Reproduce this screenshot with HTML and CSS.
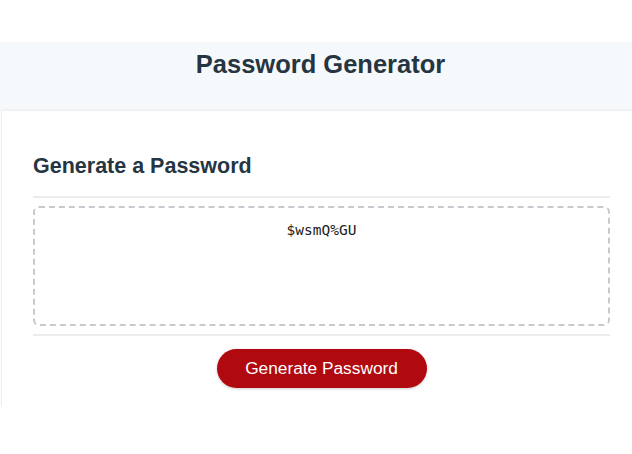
FILE: index.html
```html
<!DOCTYPE html>
<html lang="en">
<head>
    <meta charset="UTF-8">
    <meta name="viewport" content="width=device-width, initial-scale=1.0">
    <title>Password Generator</title>
    <link rel="stylesheet" href="styles.css">
</head>
<body>

    <div class="wrapper">
        <header class="header">
            <h1>Password Generator</h1>
        </header>

        <div class="card">
            <div class="card-header">
                <h2>Generate a Password</h2>
            </div>
            <div class="card-body">
                <textarea id="password" readonly>$wsmQ%GU</textarea>
            </div>
            <div class="card-footer">
                <button id="generate" class="btn">Generate Password</button>
            </div>
        </div>
    </div>

</body>
</html>
```

FILE: styles.css
```css
html, body {
    margin: 0;
    padding: 0;
    background-color: #fff;
    overflow: hidden;
}
body {
    font-family: "Liberation Sans", Arial, sans-serif;
    color: #2d3a46;
}
.wrapper {
    padding-top: 42px;
    width: 641px;
}
.header {
    background-color: #f6f9fb;
    height: 69px;
    text-align: center;
}
.header h1 {
    margin: 0;
    padding-top: 7px;
    font-size: 25.5px;
    line-height: 30px;
    font-weight: bold;
    color: #263542;
}
.card {
    margin-left: 1px;
    background-color: #fff;
    border-left: 1px solid #f0f0f0;
    box-shadow: 0 -1px 3px rgba(0, 0, 0, 0.06);
    padding: 0 31px;
    height: 296px;
}
.card-header {
    padding-top: 43px;
    padding-bottom: 17px;
    border-bottom: 2px solid #ececec;
}
.card-header h2 {
    margin: 0;
    font-size: 21.5px;
    line-height: 25px;
    font-weight: bold;
    color: #263542;
}
.card-body {
    padding: 8px 0 8px;
    border-bottom: 2px solid #ececec;
}
textarea {
    display: block;
    box-sizing: border-box;
    width: 100%;
    height: 120px;
    border: 2px dashed #c6cace;
    border-radius: 6px;
    padding: 14px 10px;
    resize: none;
    text-align: center;
    font-family: "DejaVu Sans Mono", monospace;
    font-size: 14.5px;
    color: #222;
    background: #fff;
    outline: none;
}
.card-footer {
    padding-top: 13px;
    text-align: center;
}
.btn {
    background-color: #b00a10;
    color: #fff;
    border: none;
    border-radius: 25px;
    width: 210px;
    height: 39px;
    font-family: "Liberation Sans", Arial, sans-serif;
    font-size: 17.3px;
    box-shadow: 0 1px 3px rgba(0, 0, 0, 0.2);
    cursor: pointer;
}
```
